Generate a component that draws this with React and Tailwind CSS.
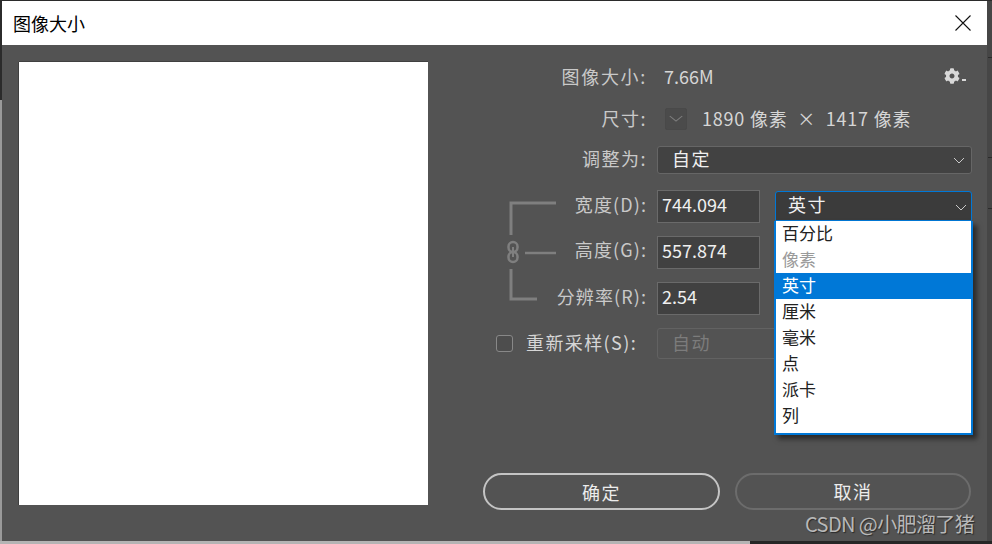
import { FaCog } from 'react-icons/fa';

const font = { cjk: 'font-["Noto_Sans_CJK_SC",sans-serif]' };

function Chevron({ className = '' }) {
  return (
    <svg width="12" height="7" viewBox="0 0 12 7" fill="none" className={className}>
      <path d="M1 1l5 5 5-5" stroke="currentColor" strokeWidth="1" />
    </svg>
  );
}

function Bracket() {
  return (
    <svg width="130" height="125" viewBox="0 0 130 125" fill="none" stroke="#7f7f7f" strokeWidth="3">
      <path d="M83 45V13h45" />
      <path d="M97 63h31" strokeWidth="2.5" />
      <path d="M83 79v30h26" />
      <rect x="80.500" y="52" width="9" height="10" rx="4.500" strokeWidth="2.500" />
      <rect x="80.500" y="62" width="9" height="10" rx="4.500" strokeWidth="2.500" />
      <path d="M85 57v10" strokeWidth="2" />
    </svg>
  );
}

const units = ['百分比', '像素', '英寸', '厘米', '毫米', '点', '派卡', '列'];

function UnitMenu() {
  return (
    <div className="absolute left-[-2px] top-[29px] z-10 w-[199px] h-[214px] bg-white border-x-2 border-b-2 border-[#0078d7] shadow-[4px_4px_5px_rgba(0,0,0,0.5)] text-[17px] text-[#222]">
      {units.map((u) => (
        <div
          key={u}
          className={`h-[26px] leading-[24px] pl-[6px] ${u === '英寸' ? 'bg-[#0078d7] text-white' : ''} ${u === '像素' ? 'text-[#9a9a9a]' : ''}`}
        >
          {u}
        </div>
      ))}
    </div>
  );
}

function NumberField({ value }) {
  return (
    <div className="w-[103px] h-[33px] bg-[#414141] border border-[#6a6a6a] pl-[4px] text-[18px] leading-[27px] text-[#f0f0f0]">
      {value}
    </div>
  );
}

export default function App() {
  return (
    <div className={`relative w-[992px] h-[544px] overflow-hidden bg-[#464646] pt-px pl-[2px] ${font.cjk}`}>
      {/* bits of the app behind the dialog */}
      <div className="absolute left-0 top-0 w-full h-px bg-[#2b2b2b]" />
      <div className="absolute left-0 top-0 w-[2px] h-[100px] bg-[#2b2b2b]" />
      <div className="absolute left-0 top-[100px] w-[2px] h-[444px] bg-[#9a9a9a]" />
      <div className="absolute left-0 top-[541px] w-[750px] h-[3px] bg-[#b4b4b4]" />
      <div className="absolute left-[750px] top-[541px] w-[242px] h-[3px] bg-[#262626]" />
      <div className="absolute left-[988px] top-[57px] w-[4px] h-px bg-[#2b2b2b]" />
      <div className="absolute left-[988px] top-[157px] w-[4px] h-px bg-[#2b2b2b]" />
      <div className="absolute left-[988px] top-[208px] w-[4px] h-px bg-[#2b2b2b]" />

      <div className="relative w-[985px] h-[540px] flex flex-col bg-[#535353]">
        <div className="h-[44px] shrink-0 bg-white flex items-center justify-between pl-[11px] pr-[16px]">
          <span className="text-[18px] text-black">图像大小</span>
          <svg width="16" height="16" viewBox="0 0 16 16" stroke="#111" strokeWidth="1.1">
            <path d="M0.500 0.500l15 15M15.500 0.500l-15 15" />
          </svg>
        </div>

        <div className="flex flex-1">
          <div className="w-[409px] h-[443px] ml-[17px] mt-[17px] bg-white shadow-[0_-1px_0_#404040,-1px_0_0_#404040]" />

          <div className="flex flex-col w-[559px] text-[18px] text-[#c9c9c9]">
            <div className="flex items-center h-[30px] mt-[17px] pb-[2px]">
              <div className="w-[219px] text-right tracking-[1.7px]">图像大小:</div>
              <div className="ml-[17px] text-[#d6d6d6]">7.66M</div>
              <FaCog className="ml-[230px] text-[#d8d8d8]" size={16} />
              <span className="ml-[2px] mt-[8px] w-[4px] h-[2px] bg-[#d8d8d8]" />
            </div>

            <div className="flex items-center h-[30px] mt-[12px] pb-[1px]">
              <div className="w-[219px] text-right tracking-[1.5px]">尺寸:</div>
              <div className="ml-[18px] w-[22px] h-[22px] rounded-[2px] bg-[#4b4b4b] border border-[#494949] flex items-center justify-center text-[#7d7d7d]">
                <Chevron className="scale-x-125" />
              </div>
              <div className="ml-[15px] tracking-[0.8px] whitespace-pre text-[#d6d6d6]">1890 像素  ×  1417 像素</div>
            </div>

            <div className="flex items-center h-[28px] mt-[12px]">
              <div className="w-[219px] text-right tracking-[1.5px] pb-[3px]">调整为:</div>
              <div className="ml-[10px] w-[315px] h-[28px] rounded-[3px] bg-[#424242] border border-[#666] flex items-center justify-between pl-[14px] pr-[6px] text-[#f0f0f0]">
                <span className="tracking-[1.5px] pb-[3px]">自定</span>
                <Chevron className="text-[#c9c9c9]" />
              </div>
            </div>

            <div className="flex mt-[16px]">
              <Bracket />
              <div className="w-[89px] flex flex-col items-end gap-[13px] tracking-[1.1px]">
                <div className="h-[33px] leading-[28px] whitespace-nowrap">宽度(D):</div>
                <div className="h-[33px] leading-[27px] whitespace-nowrap">高度(G):</div>
                <div className="h-[33px] leading-[29px] whitespace-nowrap">分辨率(R):</div>
              </div>
              <div className="ml-[10px] flex flex-col gap-[13px]">
                <NumberField value="744.094" />
                <NumberField value="557.874" />
                <NumberField value="2.54" />
              </div>
              <div className="relative ml-[15px] mt-px w-[197px] h-[30px] rounded-t-[3px] bg-[#3b3b3b] border border-[#0078d7] flex items-center justify-between pl-[12px] pr-[4px] text-[#f0f0f0]">
                <span className="tracking-[1.5px] pb-[3px]">英寸</span>
                <Chevron className="text-[#c9c9c9] mt-[3px]" />
                <UnitMenu />
              </div>
            </div>

            <div className="flex items-center h-[31px] mt-[13px]">
              <div className="ml-[68px] w-[17px] h-[17px] rounded-[3px] border border-[#888] bg-[#4d4d4d]" />
              <div className="ml-[13px] w-[131px] tracking-[1.4px] text-[#d6d6d6] whitespace-nowrap pb-[2px]">重新采样(S):</div>
              <div className="w-[315px] h-[31px] rounded-[3px] border border-[#626262] pl-[14px] leading-[27px] text-[#7c7c7c] tracking-[1.5px]">
                自动
              </div>
            </div>

            <div className="flex gap-[15px] ml-[55px] mt-[114px]">
              <button className="w-[237px] h-[37px] rounded-full border-2 border-[#c4c4c4] text-[#ececec] tracking-[1.5px] pt-px">确定</button>
              <button className="w-[236px] h-[37px] rounded-full border-2 border-[#6c6c6c] text-[#ececec] tracking-[1.5px]">取消</button>
            </div>
          </div>
        </div>
      </div>

      <div className="absolute left-[805px] top-[509px] text-[20px] tracking-[-0.6px] text-[#b8b8b8] [text-shadow:1px_1px_1px_#2a2a2a] whitespace-nowrap">
        CSDN @小肥溜了猪
      </div>
    </div>
  );
}
